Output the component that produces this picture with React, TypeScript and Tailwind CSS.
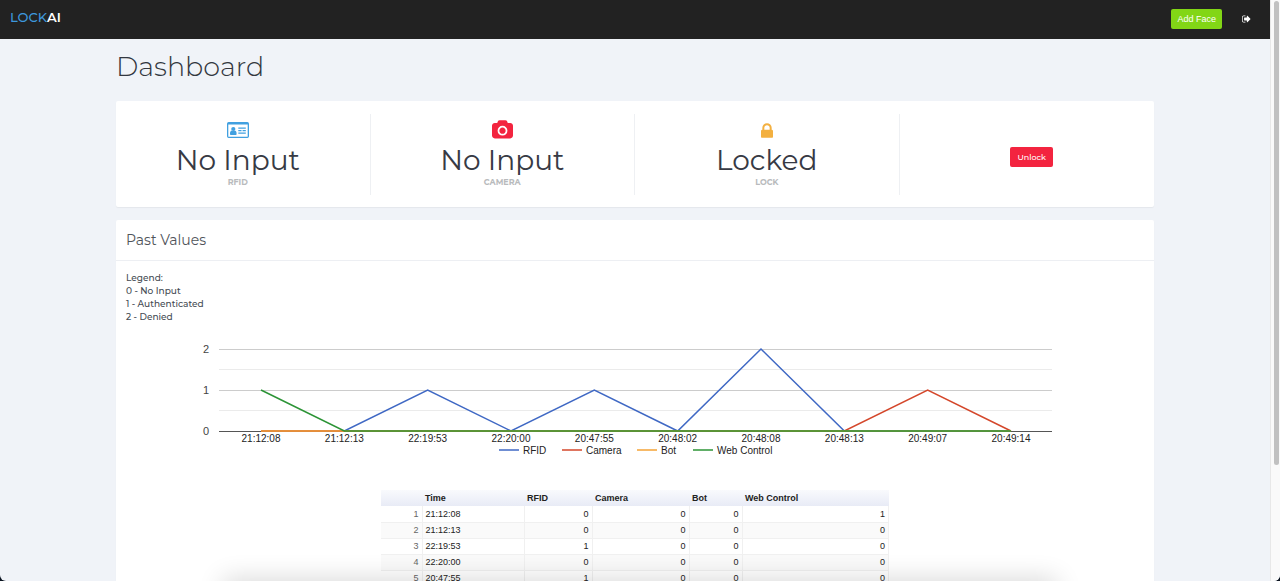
import React from "react";

type Reading = { time: string; rfid: number; camera: number; bot: number; web: number };

const readings: Reading[] = [
  { time: "21:12:08", rfid: 0, camera: 0, bot: 0, web: 1 },
  { time: "21:12:13", rfid: 0, camera: 0, bot: 0, web: 0 },
  { time: "22:19:53", rfid: 1, camera: 0, bot: 0, web: 0 },
  { time: "22:20:00", rfid: 0, camera: 0, bot: 0, web: 0 },
  { time: "20:47:55", rfid: 1, camera: 0, bot: 0, web: 0 },
  { time: "20:48:02", rfid: 0, camera: 0, bot: 0, web: 0 },
  { time: "20:48:08", rfid: 2, camera: 0, bot: 0, web: 0 },
  { time: "20:48:13", rfid: 0, camera: 0, bot: 0, web: 0 },
  { time: "20:49:07", rfid: 0, camera: 1, bot: 0, web: 0 },
  { time: "20:49:14", rfid: 0, camera: 0, bot: 0, web: 0 },
];

const series: { key: "rfid" | "camera" | "bot" | "web"; label: string; color: string; x: number }[] = [
  { key: "rfid", label: "RFID", color: "#3f68c4", x: 373 },
  { key: "camera", label: "Camera", color: "#d4472b", x: 436 },
  { key: "bot", label: "Bot", color: "#f5a336", x: 511 },
  { key: "web", label: "Web Control", color: "#2c9436", x: 567 },
];

function IdCardIcon() {
  return (
    <svg className="h-4 w-[22px]" viewBox="0 0 22 16" fill="#41a0e0" aria-hidden="true">
      <path
        fillRule="evenodd"
        d="M1.7 0h18.6Q22 0 22 1.7v12.6q0 1.7-1.7 1.7H1.7Q0 16 0 14.300V1.700Q0 0 1.700 0zM1.300 2.500v11.700q0 .5.5.5h18.400q.5 0 .5-.5V2.500z"
      />
      <circle cx="6.300" cy="7" r="2.100" />
      <path d="M3 12.300q-.2-3.500 1.700-3.900 1.600 1.200 3.200 0 1.900.4 1.700 3.900-.1.600-.7.600H3.700q-.6 0-.7-.6zM11.300 5.500h7.500v1.200h-7.500zM11.300 8h3.200v1.200h-3.200zM15.600 8h3.200v1.200h-3.200zM11.300 10.600h7.500v1.200h-7.500z" />
    </svg>
  );
}

function CameraIcon() {
  return (
    <svg className="h-5 w-[21px]" viewBox="0 0 1920 1792" fill="#f3243f" aria-hidden="true">
      <path d="M960 672q119 0 203.500 84.500t84.500 203.500-84.500 203.500-203.500 84.500-203.500-84.500-84.500-203.500 84.500-203.500 203.500-84.500zm704-416q106 0 181 75t75 181v896q0 106-75 181t-181 75h-1408q-106 0-181-75t-75-181v-896q0-106 75-181t181-75h224l51-136q19-49 69.500-84.500t103.500-35.500h512q53 0 103.500 35.500t69.500 84.500l51 136h224zm-704 1152q185 0 316.500-131.500t131.500-316.500-131.500-316.500-316.500-131.500-316.500 131.500-131.500 316.500 131.500 316.500 316.500 131.500z" />
    </svg>
  );
}

function LockIcon() {
  return (
    <svg className="h-[15px] w-3" viewBox="0 128 1152 1408" fill="#f3b040" aria-hidden="true">
      <path d="M320 768h512v-192q0-106-75-181t-181-75-181 75-75 181v192zm832 96v576q0 40-28 68t-68 28h-960q-40 0-68-28t-28-68v-576q0-40 28-68t68-28h32v-192q0-184 132-316t316-132 316 132 132 316v192h32q40 0 68 28t28 68z" />
    </svg>
  );
}

function SignOutIcon() {
  return (
    <svg className="h-[10px] w-[9px]" viewBox="0 0 1664 1792" fill="#fff" aria-hidden="true">
      <path d="M640 1440q0 4 1 20t.5 26.500-3 23.500-10 19.500-20.500 6.500h-320q-119 0-203.500-84.500t-84.500-203.500v-704q0-119 84.500-203.500t203.500-84.500h320q13 0 22.500 9.500t9.500 22.500q0 4 1 20t.5 26.500-3 23.500-10 19.500-20.500 6.500h-320q-66 0-113 47t-47 113v704q0 66 47 113t113 47h312l11.500 1 11.500 3 8 5.500 7 9 2 13.500zm928-544q0 26-19 45l-544 544q-19 19-45 19t-45-19-19-45v-288h-448q-26 0-45-19t-19-45v-384q0-26 19-45t45-19h448v-288q0-26 19-45t45-19 45 19l544 544q19 19 19 45z" />
    </svg>
  );
}

function Stat({ icon, value, label }: { icon: React.ReactNode; value: string; label: string }) {
  return (
    <div className="flex h-[81px] flex-col items-center border-r border-[#eef0f3] pt-1.5">
      <div className="flex h-5 items-center">{icon}</div>
      <div className="mt-1 text-[28px] leading-8 text-[#373a44]">{value}</div>
      <div className="text-[8px] leading-3 font-bold text-[#b9bbbd]">{label}</div>
    </div>
  );
}

const pointX = (i: number) => 135 + (i * 750) / 9;
const pointY = (v: number) => 101 - v * 41;

function Chart() {
  return (
    <svg
      className="block w-full font-['Liberation_Sans',Arial,sans-serif]"
      viewBox="0 0 1018 130"
      fontSize="10"
      role="img"
      aria-label="Past values"
    >
      {[0.5, 1.5].map((v) => (
        <path key={v} d={`M93 ${pointY(v)}H926`} stroke="#ebebeb" />
      ))}
      {[1, 2].map((v) => (
        <path key={v} d={`M93 ${pointY(v) + 0.5}H926`} stroke="#cccccc" />
      ))}
      <path d="M93 101.500H926" stroke="#555555" />
      {[0, 1, 2].map((v) => (
        <text key={v} x="83" y={pointY(v) + 4} textAnchor="end" fill="#444" fontSize="11">
          {v}
        </text>
      ))}
      {series.map((s) => (
        <polyline
          key={s.key}
          points={readings.map((r, i) => `${pointX(i)},${pointY(r[s.key])}`).join(" ")}
          fill="none"
          stroke={s.color}
          strokeWidth="1.500"
        />
      ))}
      {readings.map((r, i) => (
        <text key={r.time} x={pointX(i)} y="112" textAnchor="middle" fill="#222">
          {r.time}
        </text>
      ))}
      {series.map((s) => (
        <g key={s.key}>
          <path d={`M${s.x} 120h20`} stroke={s.color} strokeWidth="1.500" />
          <text x={s.x + 24} y="124" fill="#222">
            {s.label}
          </text>
        </g>
      ))}
    </svg>
  );
}

function ReadingsTable() {
  return (
    <table className="mx-auto w-[508px] table-fixed border-collapse font-['Liberation_Sans',Arial,sans-serif] text-[9px] text-[#222]">
      <colgroup>
        <col className="w-[41px]" />
        <col className="w-[102px]" />
        <col className="w-[68px]" />
        <col className="w-[97px]" />
        <col className="w-[53px]" />
        <col />
      </colgroup>
      <thead>
        <tr className="h-4 bg-linear-to-b from-[#f9fafd] to-[#e8ebf6] text-left leading-3">
          <th className="p-0" aria-label="Row" />
          {["Time", "RFID", "Camera", "Bot", "Web Control"].map((h) => (
            <th key={h} className="px-[3px] py-0 font-bold">
              {h}
            </th>
          ))}
        </tr>
      </thead>
      <tbody>
        {readings.map((r, i) => (
          <tr key={r.time} className="h-4 leading-3 even:bg-[#fafafa]">
            <td className="border-r border-b border-[#f0f0f0] px-[3px] py-0 text-right text-[#666]">{i + 1}</td>
            <td className="border-r border-b border-[#f0f0f0] px-[3px] py-0">{r.time}</td>
            {[r.rfid, r.camera, r.bot, r.web].map((v, c) => (
              <td key={c} className="border-r border-b border-[#f0f0f0] px-[3px] py-0 text-right">
                {v}
              </td>
            ))}
          </tr>
        ))}
      </tbody>
    </table>
  );
}

export default function App() {
  return (
    <div className="h-screen bg-[#0b1420] font-[Montserrat,Inter,sans-serif]">
      <div className="relative flex h-full overflow-hidden rounded-b-md bg-[#f0f3f8]">
        <div className="min-w-0 flex-1 overflow-y-auto [scrollbar-width:none]">
          <header className="flex h-[39px] items-center justify-between bg-[#222] pr-[19px] pb-[2px] pl-[10px]">
            <a href="#" className="pb-1 text-[13px] leading-4 font-medium text-white">
              <span className="text-[#3d97dc]">LOCK</span>
              <span className="font-semibold">AI</span>
            </a>
            <div className="flex items-center gap-5">
              <button className="h-5 rounded-xs bg-[#82d616] px-1.5 font-['Liberation_Sans',Arial,sans-serif] text-[9px] leading-3 text-white">
                Add Face
              </button>
              <a href="#logout" aria-label="Log out">
                <SignOutIcon />
              </a>
            </div>
          </header>

          <main className="mx-auto max-w-[1038px]">
            <h1 className="pt-[10px] pb-4 text-[27px] leading-9 font-light text-[#33383f]">Dashboard</h1>

            <section className="rounded-xs bg-white pt-[13px] pb-3 shadow-[0_1px_1px_rgba(0,0,0,0.05)]">
              <div className="-mx-[10px] grid grid-cols-4">
                <Stat icon={<IdCardIcon />} value="No Input" label="RFID" />
                <Stat icon={<CameraIcon />} value="No Input" label="CAMERA" />
                <Stat icon={<LockIcon />} value="Locked" label="LOCK" />
                <div className="flex items-center justify-center pt-[5px]">
                  <button className="h-5 rounded-xs bg-[#f3243f] px-[7px] text-[8px] leading-3 font-medium text-white">
                    Unlock
                  </button>
                </div>
              </div>
            </section>

            <section className="mt-[13px] rounded-xs bg-white shadow-[0_1px_1px_rgba(0,0,0,0.05)]">
              <h2 className="h-[41px] border-b border-[#edeff3] px-[10px] text-[14px] leading-10 text-[#50545a]">
                Past Values
              </h2>
              <div className="px-[10px] pt-[10px] pb-5">
                <div className="text-[9px] leading-[13px] font-medium text-[#444a52]">
                  <p>Legend:</p>
                  <p>0 - No Input</p>
                  <p>1 - Authenticated</p>
                  <p>2 - Denied</p>
                </div>
                <div className="pt-[7px] pb-[30px]">
                  <Chart />
                </div>
                <ReadingsTable />
              </div>
            </section>
          </main>
        </div>

        <div className="w-[10px] shrink-0 border-l border-[#e8e8e8] bg-[#fafafa] px-[2px] pt-px" aria-hidden="true">
          <div className="ml-px h-4/5 w-[5px] rounded-full bg-[#c1c1c1]" />
        </div>

        <div
          className="pointer-events-none absolute inset-x-[225px] -bottom-5 h-5 shadow-[0_0_26px_2px_rgba(0,0,0,0.16)]"
          aria-hidden="true"
        />
      </div>
    </div>
  );
}
